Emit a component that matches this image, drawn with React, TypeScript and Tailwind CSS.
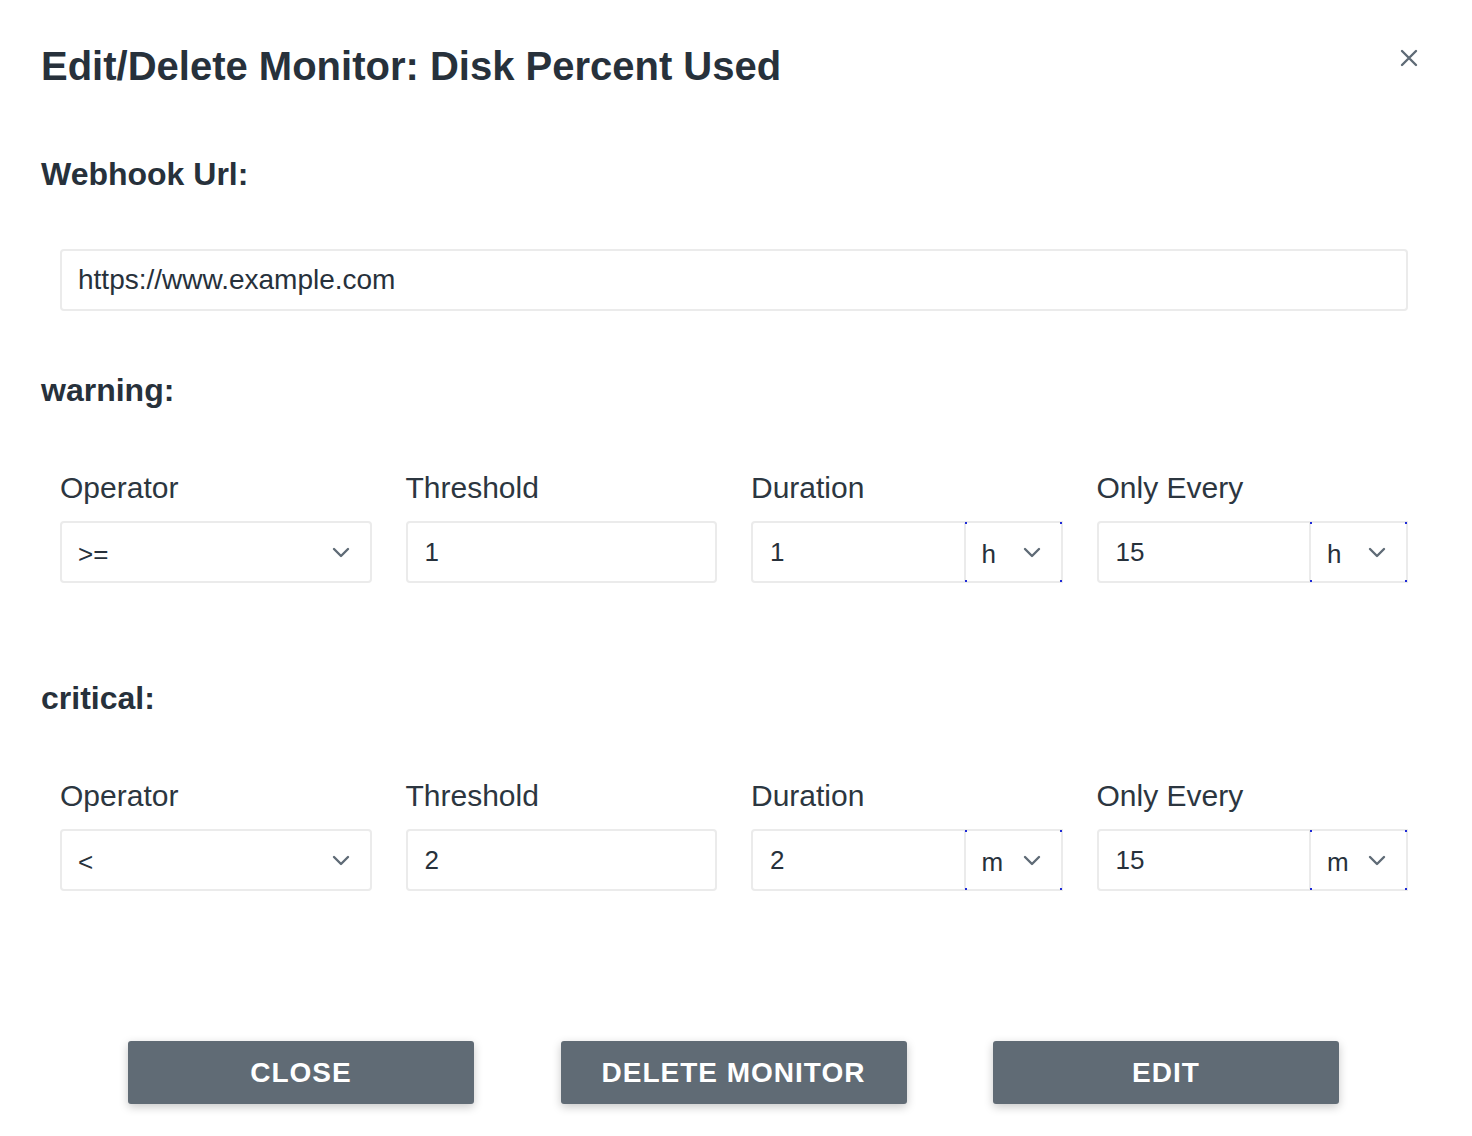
import React from 'react';

const Chevron = () => (
  <svg width="18" height="12" viewBox="0 0 18 12" fill="none" className="shrink-0">
    <path d="M2 3l7 7 7-7" stroke="#5f6b76" strokeWidth="2.4" strokeLinecap="round" strokeLinejoin="round" />
  </svg>
);

const Corners = () => (
  <>
    <span className="absolute -left-px -top-px h-[2px] w-[2px] bg-[#1f2bd6]" />
    <span className="absolute -right-px -top-px h-[2px] w-[2px] bg-[#1f2bd6]" />
    <span className="absolute -left-px -bottom-px h-[2px] w-[2px] bg-[#1f2bd6]" />
    <span className="absolute -right-px -bottom-px h-[2px] w-[2px] bg-[#1f2bd6]" />
  </>
);

interface Cond {
  op: string;
  threshold: string;
  duration: string;
  durUnit: string;
  every: string;
  everyUnit: string;
}

const box = 'h-[62px] border-2 border-[#ebebeb] rounded-[4px] bg-white flex items-center text-[26px] text-[#27313b]';

function Label({ children }: { children: React.ReactNode }) {
  return <div className="text-[30px] leading-[34px] text-[#2c3640]">{children}</div>;
}

function UnitInput({ value, unit }: { value: string; unit: string }) {
  return (
    <div className={`${box} overflow-visible`}>
      <div className="flex-1 pl-[17px]">{value}</div>
      <div className="relative h-[62px] w-[99px] -my-[2px] -mr-[2px] border-2 border-[#ebebeb] flex items-center pl-[16px] pr-[20px] justify-between">
        <span className="pt-[4px]">{unit}</span>
        <Chevron />
        <Corners />
      </div>
    </div>
  );
}

function Condition({ title, c }: { title: string; c: Cond }) {
  return (
    <section>
      <h2 className="text-[32px] leading-[36px] font-bold text-[#27313b]">{title}</h2>
      <div className="mt-[63px] pl-[19px] grid grid-cols-4 gap-x-[34px]">
        <div>
          <Label>Operator</Label>
          <div className={`${box} mt-[16px] justify-between pl-[16px] pr-[20px]`}>
            <span className="pt-[4px]">{c.op}</span>
            <Chevron />
          </div>
        </div>
        <div>
          <Label>Threshold</Label>
          <div className={`${box} mt-[16px] pl-[17px]`}>{c.threshold}</div>
        </div>
        <div>
          <Label>Duration</Label>
          <div className="mt-[16px]">
            <UnitInput value={c.duration} unit={c.durUnit} />
          </div>
        </div>
        <div>
          <Label>Only Every</Label>
          <div className="mt-[16px]">
            <UnitInput value={c.every} unit={c.everyUnit} />
          </div>
        </div>
      </div>
    </section>
  );
}

const Button = ({ children }: { children: React.ReactNode }) => (
  <button
    type="button"
    className="h-[63px] w-[346px] rounded-[3px] bg-[#606b75] text-white text-[28px] font-bold tracking-[1px] shadow-[0_3px_10px_rgba(0,0,0,0.22)]"
  >
    {children}
  </button>
);

export default function App() {
  return (
    <div
      className="relative w-[1472px] h-[1136px] bg-white pl-[41px] pr-[64px] pt-[42px] text-[#27313b]"
      style={{ fontFamily: '"Liberation Sans", Arial, sans-serif' }}
    >
      <button type="button" className="absolute right-[52px] top-[47px] w-[22px] h-[22px] flex items-center justify-center">
        <svg width="18" height="18" viewBox="0 0 18 18">
          <path d="M2 2l14 14M16 2L2 16" stroke="#5f6b76" strokeWidth="2.4" strokeLinecap="round" />
        </svg>
      </button>

      <h1 className="text-[40px] leading-[48px] font-bold">Edit/Delete Monitor: Disk Percent Used</h1>

      <h2 className="mt-[66px] text-[32px] leading-[36px] font-bold">Webhook Url:</h2>
      <div className="mt-[57px] pl-[19px]">
        <div className={`${box} pl-[16px] text-[28px]`}>https://www.example.com</div>
      </div>

      <div className="mt-[61px]">
        <Condition title="warning:" c={{ op: '>=', threshold: '1', duration: '1', durUnit: 'h', every: '15', everyUnit: 'h' }} />
      </div>
      <div className="mt-[97px]">
        <Condition title="critical:" c={{ op: '<', threshold: '2', duration: '2', durUnit: 'm', every: '15', everyUnit: 'm' }} />
      </div>

      <div className="mt-[150px] flex gap-[86.5px] pl-[87px]">
        <Button>CLOSE</Button>
        <Button>DELETE MONITOR</Button>
        <Button>EDIT</Button>
      </div>
    </div>
  );
}
